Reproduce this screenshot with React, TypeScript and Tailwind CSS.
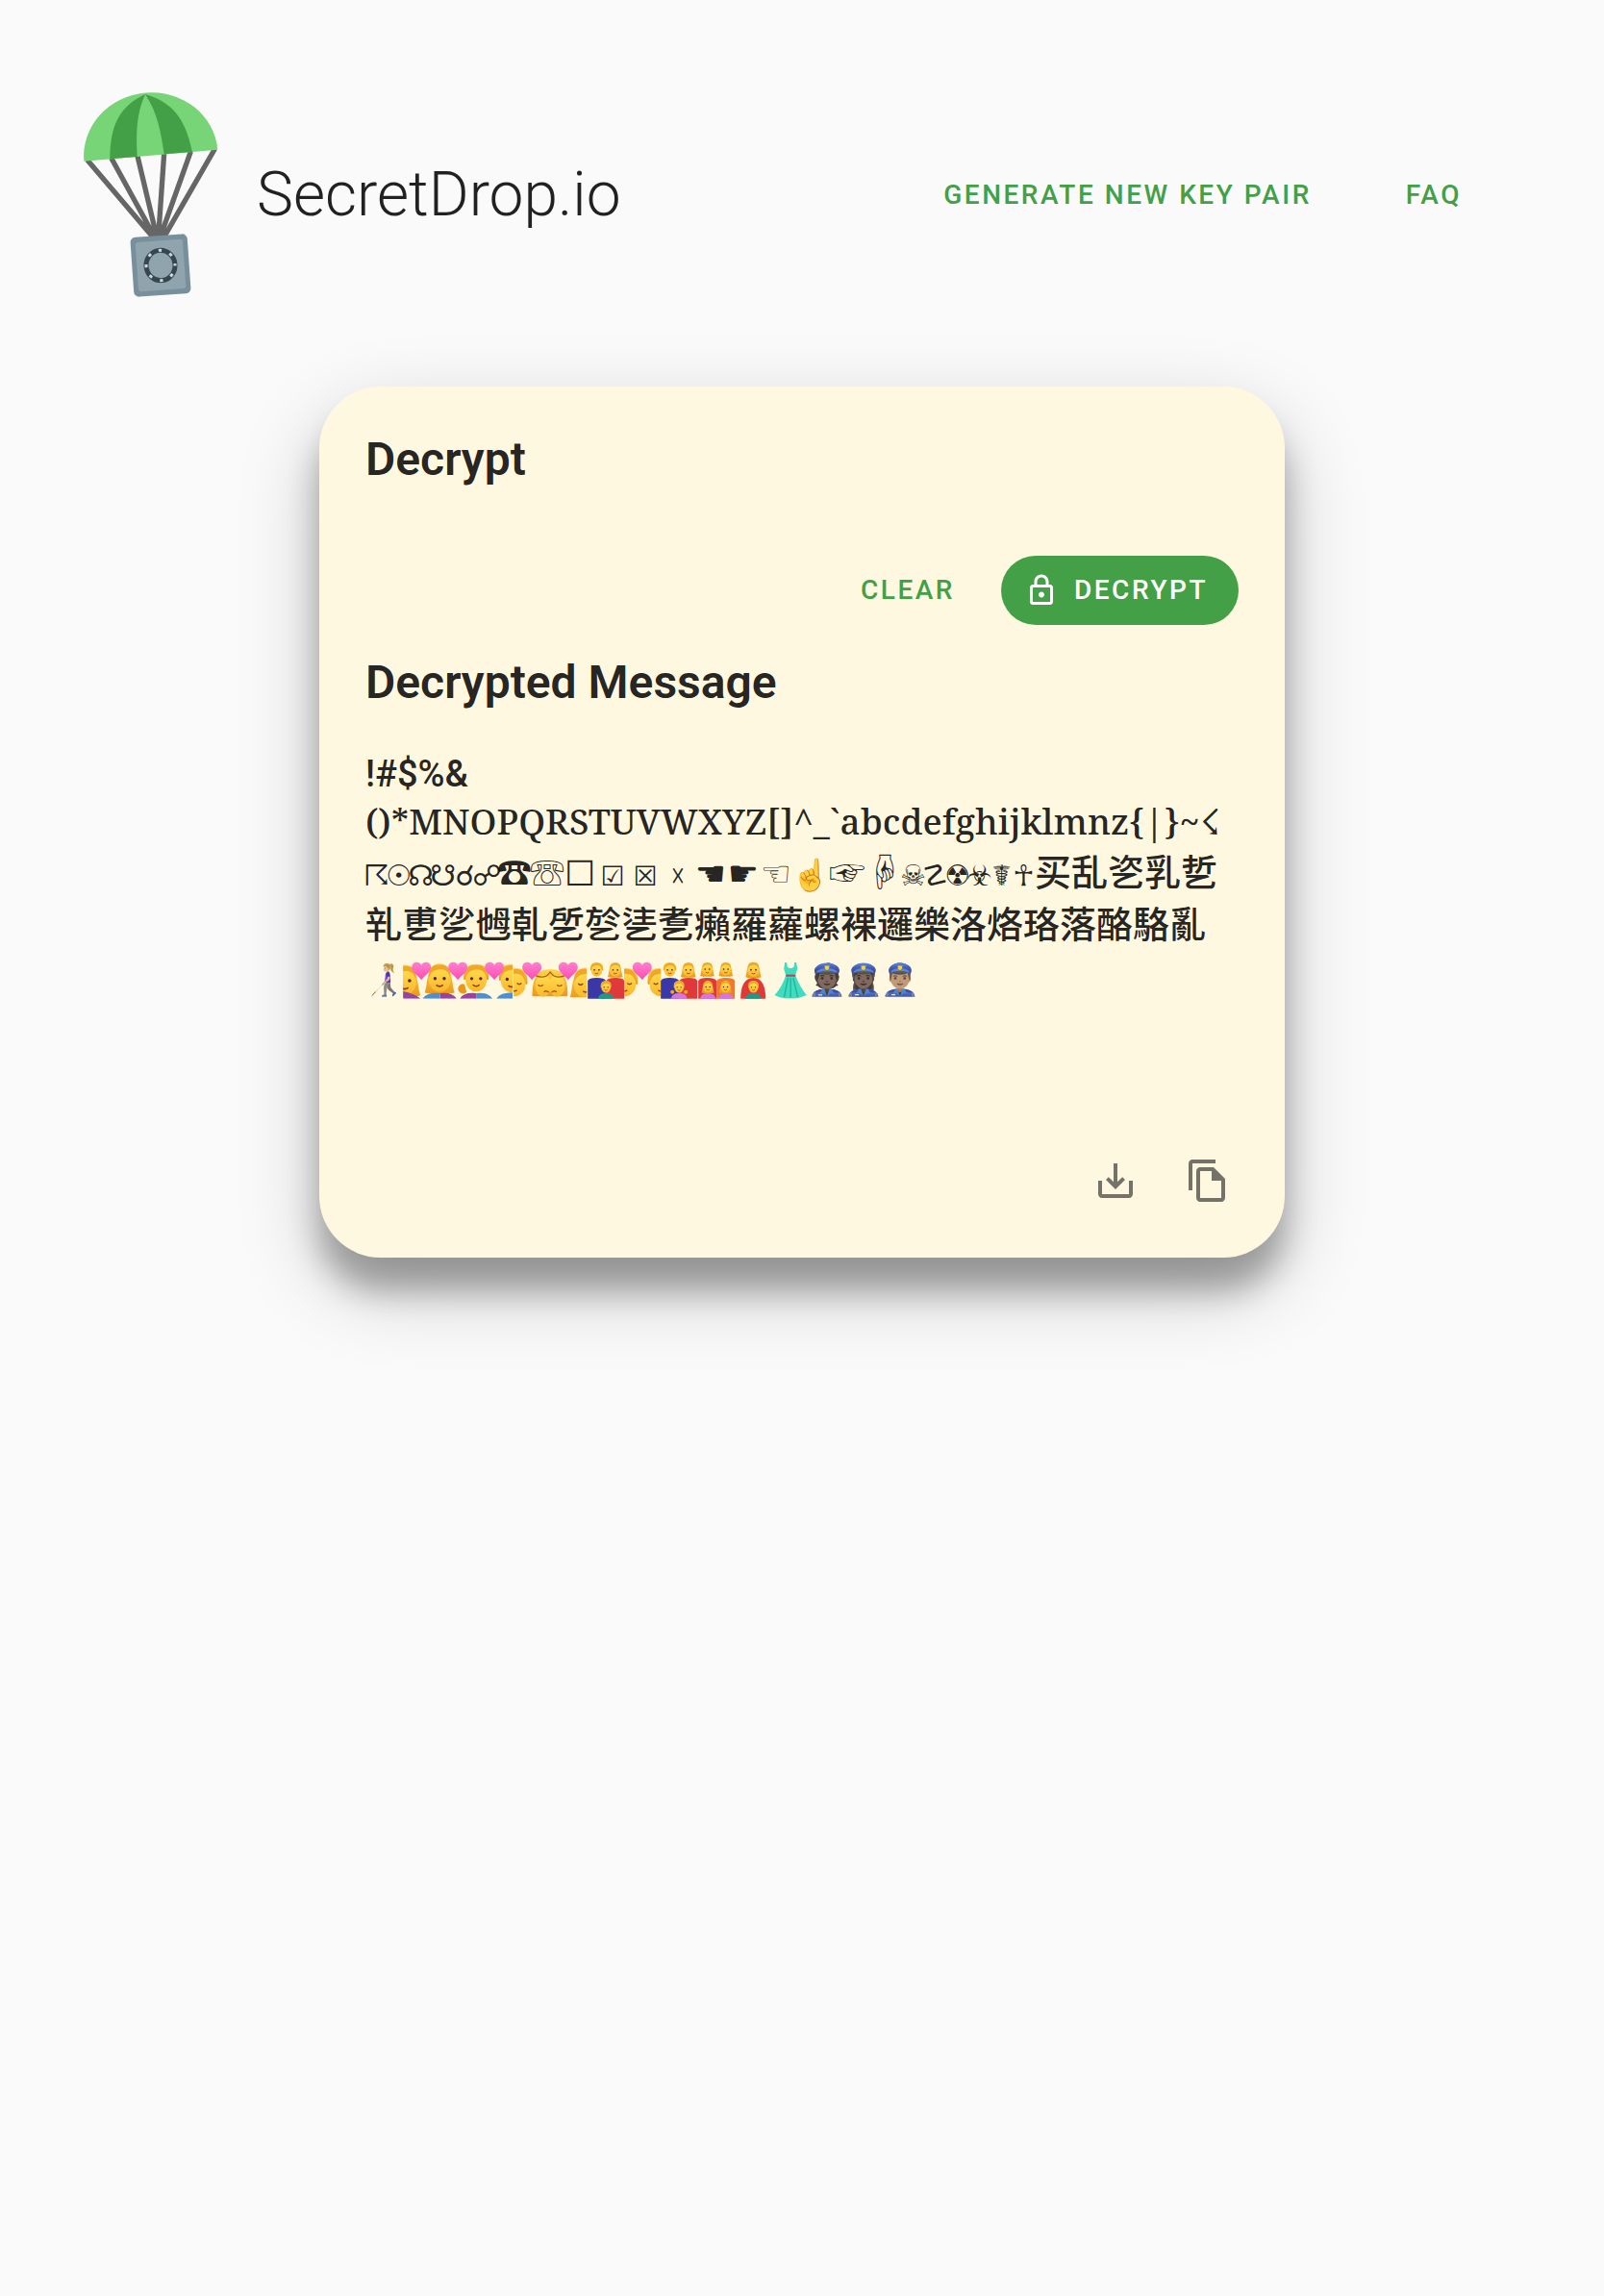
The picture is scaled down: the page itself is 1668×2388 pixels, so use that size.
import React from "react";

function Logo() {
  return (
    <svg viewBox="51 45 420 642" className="h-[214px] w-[140px] shrink-0" aria-hidden="true">
      <g stroke="#666" strokeWidth="16" fill="none">
        <path d="M62 256L266 496M137 250L272 496M219 244L279 496M302 236L284 496M385 230L290 496M460 222L302 496" />
      </g>
      <path d="M52 260A209 196 -5 0 1 469 224Z" fill="#77d477" />
      <path d="M133 253C134 150 160 90 243 51C216 110 214 170 218 246Z" fill="#43a047" />
      <path d="M243 51C345 80 372 150 390 231L302 238C292 170 282 110 243 51Z" fill="#43a047" />
      <g transform="rotate(-4 291 585)">
        <rect x="202" y="492" width="178" height="186" rx="16" fill="#78909c" />
        <rect x="217" y="508" width="148" height="154" rx="8" fill="#90a4ae" />
        <ellipse cx="291" cy="585" rx="45" ry="47" fill="none" stroke="#37474f" strokeWidth="15" />
        <ellipse cx="291" cy="585" rx="45" ry="47" fill="none" stroke="#cfd8dc" strokeWidth="9" strokeDasharray="10 26.2" strokeDashoffset="5" />
      </g>
    </svg>
  );
}

function LockIcon() {
  return (
    <svg viewBox="0 0 24 24" className="size-9" fill="currentColor" aria-hidden="true">
      <path d="M18 8h-1V6c0-2.76-2.24-5-5-5S7 3.24 7 6v2H6c-1.1 0-2 .9-2 2v10c0 1.1.9 2 2 2h12c1.1 0 2-.9 2-2V10c0-1.1-.9-2-2-2zM9 6c0-1.66 1.34-3 3-3s3 1.34 3 3v2H9V6zm9 14H6V10h12v10zm-6-3c1.1 0 2-.9 2-2s-.9-2-2-2-2 .9-2 2 .9 2 2 2z" />
    </svg>
  );
}

function DownloadIcon() {
  return (
    <svg viewBox="0 0 24 24" className="size-12" fill="currentColor" aria-hidden="true">
      <path d="M19 12v7H5v-7H3v7c0 1.1.9 2 2 2h14c1.1 0 2-.9 2-2v-7h-2zm-6 .67l2.59-2.58L17 11.5l-5 5-5-5 1.41-1.41L11 12.67V3h2z" />
    </svg>
  );
}

function CopyIcon() {
  return (
    <svg viewBox="0 0 24 24" className="size-12" fill="currentColor" aria-hidden="true">
      <path d="M16 1H4c-1.1 0-2 .9-2 2v14h2V3h12V1z" />
      <path fillRule="evenodd" d="M15 5H8c-1.1 0-2 .9-2 2v14c0 1.1.9 2 2 2h11c1.1 0 2-.9 2-2V11l-6-6zM8 7h6v5h5v9H8V7z" />
    </svg>
  );
}

function Heart({ x }: { x: number }) {
  return (
    <path
      transform={`translate(${x} 720)`}
      d="M0 29C-10 14-30 6-30-10C-30-22-22-27-14-27C-7-27-2-23 0-18C2-23 7-27 14-27C22-27 30-22 30-10C30 6 10 14 0 29Z"
      fill="url(#heart)"
    />
  );
}

function Face({ x, y, r, long, asleep }: { x: number; y: number; r: number; long?: boolean; asleep?: boolean }) {
  return (
    <g transform={`translate(${x} ${y}) scale(${r / 10})`}>
      <path
        d={long ? "M-13 11C-10 4-12-14 0-14C12-14 10 4 13 11C8 13-8 13-13 11Z" : "M-11 0C-12-11-7-14 0-14C7-14 12-11 11 0Z"}
        fill="url(#hair)"
      />
      <ellipse rx="9.5" ry="10.5" fill="url(#skin)" />
      <path d="M-9-2C-8-8-2-9 1-9C5-9 8-7 9-2C10-12 5-13 0-13C-5-13-10-12-9-2Z" fill="#f0a626" />
      {asleep ? (
        <path d="M-6-1Q-4 1-2-1M2-1Q4 1 6-1M-2 5Q0 7 2 5" stroke="#8a4b10" strokeWidth="1.2" fill="none" />
      ) : (
        <g>
          <circle cx="-4" cy="-1" r="1.4" fill="#4a2b12" />
          <circle cx="4" cy="-1" r="1.4" fill="#4a2b12" />
          <path d="M-3 4.5Q0 7 3 4.5" stroke="#8a3b10" strokeWidth="1.3" fill="none" />
        </g>
      )}
    </g>
  );
}

function Family({ x, child }: { x: number; child: "boy" | "girl" }) {
  return (
    <g transform={`translate(${x} 0)`}>
      <path d="M0 807V752Q4 742 28 742Q52 742 57 752V807Z" fill="#3a37a8" />
      <path d="M57 807V752Q64 742 86 742Q112 742 114 752V807Z" fill="#e0393c" />
      <Face x={28} y={719} r={18} />
      <Face x={86} y={719} r={18} long />
      <path d="M32 807Q34 790 57 790Q80 790 82 807Z" fill={child === "boy" ? "#1d9a86" : "#d774df"} />
      <Face x={57} y={773} r={15} />
      {child === "girl" && <path d="M36 780a6 6 0 1 0 .1 0M78 780a6 6 0 1 0 .1 0" fill="#f2a51f" />}
    </g>
  );
}

function PeopleStrip() {
  return (
    <svg viewBox="147 691 1265 117" className="h-[39px] w-[422px] shrink-0" role="img" aria-label="Couples, families and a dress">
      <defs>
        <linearGradient id="heart" x1="0" y1="0" x2="0" y2="1">
          <stop offset="0" stopColor="#ff7fd0" />
          <stop offset="1" stopColor="#f84fb0" />
        </linearGradient>
        <linearGradient id="skin" x1="0" y1="0" x2="0" y2="1">
          <stop offset="0" stopColor="#ffdc50" />
          <stop offset="1" stopColor="#fbb62a" />
        </linearGradient>
        <linearGradient id="hair" x1="0" y1="0" x2="0" y2="1">
          <stop offset="0" stopColor="#ffd348" />
          <stop offset="1" stopColor="#e9981c" />
        </linearGradient>
        <clipPath id="faces"><path d="M147 690H489V807H147Z" /></clipPath>
        <clipPath id="kisses"><path d="M492 690H720V803H492Z" /></clipPath>
        <clipPath id="kiss"><path d="M837 690H951V803H837Z" /></clipPath>
      </defs>
      <g clipPath="url(#faces)">
        <Face x={152} y={755} r={38} long />
        <Face x={261} y={748} r={36} long />
        <Face x={375} y={748} r={35} />
        <path d="M339 762a15 15 0 1 0 6 24Z" fill="#e9981c" />
        <Face x={486} y={750} r={36} />
        <path d="M147 807V784Q180 790 202 807ZM262 807V790Q300 786 314 807ZM324 807Q336 786 375 790V807Z" fill="#97439f" />
        <path d="M208 807Q222 786 262 790V807ZM375 807V790Q412 786 426 807ZM438 807Q450 788 489 788V807Z" fill="#4d8fd0" />
        <Heart x={204} />
        <Heart x={318} />
        <Heart x={432} />
      </g>
      <g clipPath="url(#kisses)">
        <Face x={495} y={762} r={36} asleep />
        <path d="M550 800Q548 712 606 716Q664 712 660 800Z" fill="url(#hair)" />
        <ellipse cx="584" cy="767" rx="25" ry="34" fill="url(#skin)" />
        <ellipse cx="627" cy="767" rx="25" ry="34" fill="url(#skin)" />
        <path d="M568 764Q576 772 584 764M627 764Q635 772 643 764M586 786Q594 780 602 788M610 788Q618 780 626 786M560 735Q590 748 606 724Q622 748 652 735" stroke="#a95f12" strokeWidth="4" fill="none" />
        <Face x={716} y={764} r={38} long asleep />
        <Heart x={549} />
        <Heart x={662} />
      </g>
      <Family x={723} child="boy" />
      <g clipPath="url(#kiss)">
        <Face x={839} y={762} r={36} asleep />
        <Face x={950} y={762} r={36} asleep />
        <Heart x={893} />
      </g>
      <Family x={951} child="girl" />
      <g>
        <path d="M1068 807V752Q1072 742 1096 742Q1120 742 1125 752V807Z" fill="#e0393c" />
        <path d="M1125 807V752Q1132 742 1154 742Q1180 742 1182 752V807Z" fill="#ee7a2e" />
        <Face x={1096} y={717} r={17} long />
        <Face x={1154} y={717} r={17} long />
        <path d="M1074 807Q1076 790 1098 790Q1120 790 1122 807ZM1130 807Q1132 790 1154 790Q1176 790 1178 807Z" fill="#d774df" />
        <Face x={1098} y={772} r={15} long />
        <Face x={1153} y={772} r={15} long />
      </g>
      <g>
        <path d="M1200 807Q1200 744 1240 742Q1278 744 1278 807Z" fill="#e0393c" />
        <Face x={1240} y={719} r={19} long />
        <path d="M1215 807Q1217 790 1240 790Q1262 790 1264 807Z" fill="#1d9a86" />
        <Face x={1240} y={773} r={15} />
      </g>
      <g>
        <path d="M1338 694H1344L1346 708Q1356 716 1366 708L1368 694H1374L1377 714L1371 734Q1384 770 1406 796Q1380 808 1356 806Q1328 808 1306 796Q1330 770 1341 734L1335 714Z" fill="#3fdcc0" />
        <path d="M1341 732H1371V738H1341Z" fill="#b0475f" />
        <path d="M1348 742L1336 802M1356 742V804M1364 742L1378 802" stroke="#22b59b" strokeWidth="4" />
      </g>
    </svg>
  );
}

function Glyphs({ chars, cell }: { chars: string; cell: string }) {
  return (
    <>
      {Array.from(chars).map((c) => (
        <span key={c} className={`flex shrink-0 justify-center ${cell}`}>{c}</span>
      ))}
    </>
  );
}

const small = "w-[23px] text-[30px] font-['DejaVu_Sans',sans-serif]";

export default function App() {
  return (
    <div className="min-h-screen bg-[#fafafa] font-[Roboto,sans-serif] text-black/87">
      <header className="flex items-center px-[87px] pt-24">
        <Logo />
        <h1 className="ml-10 text-[64px] font-light">SecretDrop.io</h1>
        <nav className="ml-auto flex gap-[98px] pr-[61px] text-[28px] font-medium tracking-[0.09em] text-[#43a047]">
          <a href="#generate">GENERATE NEW KEY PAIR</a>
          <a href="#faq">FAQ</a>
        </nav>
      </header>
      <main className="mx-auto mt-[92px] max-w-[1004px] rounded-[64px] bg-[#fff8e1] px-12 pt-12 pb-14 shadow-[0_34px_32px_rgba(0,0,0,0.28),0_32px_84px_rgba(0,0,0,0.22)]">
        <h2 className="text-[48px] leading-[56px] font-semibold">Decrypt</h2>
        <div className="mt-[72px] flex items-center justify-end gap-12 text-[28px] font-medium tracking-[0.09em]">
          <button type="button" className="text-[#43a047]">CLEAR</button>
          <button type="button" className="flex h-[72px] items-center gap-4 rounded-full bg-[#43a047] pr-8 pl-6 text-white">
            <LockIcon />
            DECRYPT
          </button>
        </div>
        <h2 className="mt-8 text-[48px] leading-[56px] font-semibold">Decrypted Message</h2>
        <div className="mt-[42px] mr-4 -ml-1 overflow-hidden pl-1 font-['Noto_Sans_CJK_SC',sans-serif] text-[38px] leading-[54px] font-medium whitespace-nowrap">
          <div className="flex h-[50px] items-center font-[Roboto,sans-serif]">!#$%&amp;</div>
          <div className="flex h-12 items-center font-['Noto_Serif','Liberation_Serif',serif] text-[37px]">
            ()*MNOPQRSTUVWXYZ[]^_`abcdefghijklmnz&#123;|&#125;~☇
          </div>
          <div className="flex h-[54px] items-baseline">
            <Glyphs chars="☈☉☊☋☌☍" cell={small} />
            <Glyphs chars="☎☏☐" cell="w-[34px] text-[36px] font-['Noto_Sans_CJK_JP',sans-serif]" />
            <Glyphs chars="☑☒☓" cell="w-[34px] text-[28px] font-['DejaVu_Sans',sans-serif]" />
            <Glyphs chars="☚☛☜" cell="w-[34px] text-[36px] font-['DejaVu_Sans',sans-serif]" />
            <Glyphs chars="☝" cell="w-[38px] text-[32px] font-['Noto_Color_Emoji',sans-serif]" />
            <Glyphs chars="☞☟" cell="w-[38px] text-[38px] font-['Noto_Sans_CJK_JP',sans-serif]" />
            <Glyphs chars="☠☡☢☣☤☥" cell={small} />
            <span>买乱乲乳乴</span>
          </div>
          <div className="flex h-[54px] items-center">乵乶乷乸乹乺乻乼乽癩羅蘿螺裸邏樂洛烙珞落酪駱亂</div>
          <div className="flex h-[66px] items-center font-['Noto_Color_Emoji',sans-serif] text-[32px]">
            <span className="flex w-[39px] shrink-0 justify-center">👩🏼‍🦯</span>
            <PeopleStrip />
            <span className="flex w-[38px] shrink-0 justify-center">👮🏿</span>
            <span className="flex w-[38px] shrink-0 justify-center">👮🏿‍♀️</span>
            <span className="flex w-[38px] shrink-0 justify-center">👮🏽‍♂️</span>
          </div>
        </div>
        <div className="mt-[152px] mr-2 flex justify-end gap-12 text-black/54">
          <button type="button" aria-label="Download message"><DownloadIcon /></button>
          <button type="button" aria-label="Copy message"><CopyIcon /></button>
        </div>
      </main>
    </div>
  );
}
